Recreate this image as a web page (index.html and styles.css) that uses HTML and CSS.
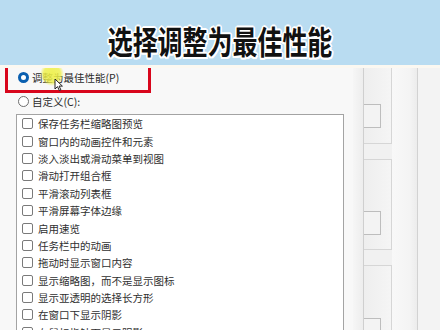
FILE: index.html
```html
<!DOCTYPE html>
<html lang="zh-CN">
<head>
<meta charset="utf-8">
<title>选择调整为最佳性能</title>
<link rel="stylesheet" href="styles.css">
</head>
<body>
<div class="page">
  <header class="banner">
    <h1 class="title">选择调整为最佳性能</h1>
  </header>
  <main class="main">
    <section class="dialog">
      <div class="radio-row"><span class="radio checked"></span><span class="label">调整为最佳性能(P)</span></div>
      <div class="radio-row"><span class="radio"></span><span class="label">自定义(C):</span></div>
      <div class="listbox">
        <div class="item"><span class="box"></span><span>保存任务栏缩略图预览</span></div>
        <div class="item"><span class="box"></span><span>窗口内的动画控件和元素</span></div>
        <div class="item"><span class="box"></span><span>淡入淡出或滑动菜单到视图</span></div>
        <div class="item"><span class="box"></span><span>滑动打开组合框</span></div>
        <div class="item"><span class="box"></span><span>平滑滚动列表框</span></div>
        <div class="item"><span class="box"></span><span>平滑屏幕字体边缘</span></div>
        <div class="item"><span class="box"></span><span>启用速览</span></div>
        <div class="item"><span class="box"></span><span>任务栏中的动画</span></div>
        <div class="item"><span class="box"></span><span>拖动时显示窗口内容</span></div>
        <div class="item"><span class="box"></span><span>显示缩略图，而不是显示图标</span></div>
        <div class="item"><span class="box"></span><span>显示亚透明的选择长方形</span></div>
        <div class="item"><span class="box"></span><span>在窗口下显示阴影</span></div>
        <div class="item"><span class="box"></span><span>在鼠标指针下显示阴影</span></div>
      </div>
      <div class="mark-frame"></div>
      <div class="click-glow"></div>
      <svg class="cursor" width="10" height="14" viewBox="0 0 10 14">
        <path d="M1 1 L1 11 L3.5 8.6 L5.4 12.6 L6.9 11.9 L5.1 8.1 L8.4 8.1 Z" fill="#fff" stroke="#222" stroke-width="1" stroke-linejoin="round"/>
      </svg>
    </section>
    <div class="col col-a"></div>
    <div class="col col-b">
      <div class="frame f1"><span class="btn"></span></div>
      <div class="frame f2"><span class="btn"></span></div>
      <div class="frame f3"><span class="btn"></span></div>
    </div>
    <div class="col col-c"></div>
    <div class="col col-d"></div>
  </main>
</div>
</body>
</html>
```

FILE: styles.css
```css
* { box-sizing: border-box; }
html, body { margin: 0; padding: 0; }
body {
  width: 440px;
  height: 330px;
  overflow: hidden;
  background: #f7f7f7;
  font-family: "Noto Sans CJK SC", "Noto Sans", sans-serif;
}
.page { width: 440px; height: 330px; overflow: hidden; }

.banner {
  height: 65px;
  background: #b9dcf1;
  display: flex;
  justify-content: center;
  align-items: flex-start;
  padding-top: 23px;
}
.title {
  margin: 0;
  font-family: "Noto Sans CJK SC", sans-serif;
  font-weight: 700;
  font-size: 32px;
  line-height: 34px;
  color: #111;
  white-space: nowrap;
  transform: scaleX(0.78);
  text-shadow:
    2px 0 0 #fff, -2px 0 0 #fff, 0 2px 0 #fff, 0 -2px 0 #fff,
    1.5px 1.5px 0 #fff, -1.5px 1.5px 0 #fff, 1.5px -1.5px 0 #fff, -1.5px -1.5px 0 #fff;
}

.main {
  height: 265px;
  display: flex;
  overflow: hidden;
  border-top: 3px solid #fbf8f1;
}

.dialog {
  position: relative;
  width: 353px;
  flex: none;
  background: #f8f8f8;
  padding-left: 16px;
  margin-top: -3px;
}

.radio-row {
  height: 24px;
  display: flex;
  align-items: center;
  padding-left: 2px;
  font-size: 10.5px;
  color: #2a2a2a;
}
.radio {
  width: 11px;
  height: 11px;
  border-radius: 50%;
  border: 1px solid #6e6e6e;
  background: #fff;
  margin-right: 3px;
  flex: none;
}
.radio.checked {
  border: 3px solid #0a5fb0;
  background: #fff;
}

.listbox {
  margin-top: 1px;
  width: 328px;
  height: 240px;
  background: #fff;
  border: 1px solid #a3a3a3;
  padding-left: 5px;
}
.item {
  height: 17.4px;
  display: flex;
  align-items: center;
  font-size: 10.5px;
  color: #2f2f2f;
  white-space: nowrap;
}
.box {
  width: 11px;
  height: 11px;
  border: 1px solid #7a7a7a;
  border-radius: 2px;
  background: #fff;
  margin-right: 5px;
  flex: none;
}

.mark-frame {
  position: absolute;
  left: 5px;
  top: 0;
  width: 146px;
  height: 28px;
  border: 3px solid #d8061c;
}
.click-glow {
  position: absolute;
  left: 40px;
  top: -3px;
  width: 24px;
  height: 24px;
  border-radius: 50%;
  background: radial-gradient(circle closest-side, rgba(238, 240, 70, 0.9) 0%, rgba(238, 240, 70, 0.8) 70%, rgba(238, 240, 70, 0) 100%);
}
.cursor {
  position: absolute;
  left: 54px;
  top: 13px;
}

.col { height: 100%; flex: none; }
.col-a {
  width: 11px;
  background: linear-gradient(to right, #f6f6f6, #ededed);
  border-right: 1px solid #cfcfcf;
}
.col-b {
  width: 28px;
  background: #f1f1f1;
  display: flex;
  flex-direction: column;
  gap: 15px;
}
.frame {
  border-right: 1px solid #d6d6d6;
  border-bottom: 1px solid #d6d6d6;
  background: linear-gradient(to right, #eeeeee, #f5f5f5);
  flex: none;
}
.frame.f1 { height: 76px; padding-top: 36px; }
.frame.f2 { height: 91px; border-top: 1px solid #d6d6d6; padding-top: 51px; }
.frame.f3 { height: 80px; border-top: 1px solid #d6d6d6; padding-top: 52px; }
.btn {
  display: block;
  width: 17px;
  height: 24px;
  border: 1px solid #bdbdbd;
  border-left: none;
  background: #f3f3f3;
}
.col-c {
  width: 26px;
  background: linear-gradient(to right, #f8f8f8, #f4f4f4 70%, #ececec);
  border-right: 1px solid #d2d2d2;
}
.col-d {
  width: 22px;
  background: #f3f3f3;
}
```
